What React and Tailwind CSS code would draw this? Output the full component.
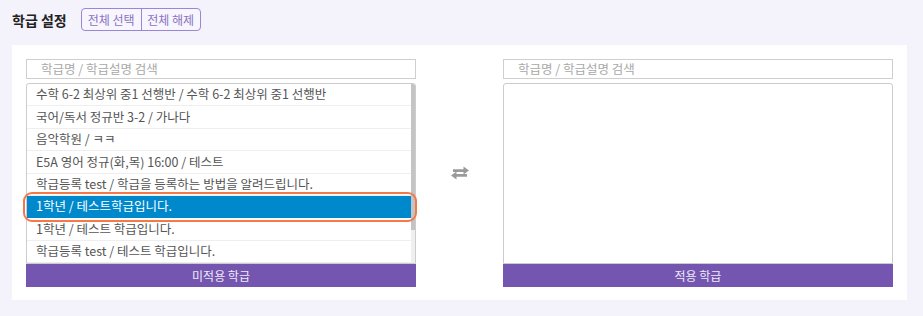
import React from "react";

const rows = [
  "수학 6-2 최상위 중1 선행반 / 수학 6-2 최상위 중1 선행반",
  "국어/독서 정규반 3-2 / 가나다",
  "음악학원 / ㅋㅋ",
  "E5A 영어 정규(화,목) 16:00 / 테스트",
  "학급등록 test / 학급을 등록하는 방법을 알려드립니다.",
  "1학년 / 테스트학급입니다.",
  "1학년 / 테스트 학급입니다.",
  "학급등록 test / 테스트 학급입니다.",
];

function SwapIcon() {
  return (
    <svg width="20" height="14" viewBox="0 0 20 14" fill="#9a9a9a">
      <path d="M3 3.2 L13.5 3.2 L13.5 0.6 L19 4.6 L13.5 8.6 L13.5 6 L3 6 Z" />
      <path d="M17 8 L6.5 8 L6.5 5.4 L1 9.4 L6.5 13.4 L6.5 10.8 L17 10.8 Z" />
    </svg>
  );
}

function SearchBox() {
  return (
    <div className="h-[20px] border border-[#cfcfcf] bg-white flex items-center pl-[14px] text-[12.5px] text-[#a8a8a8] leading-none">
      학급명 / 학급설명 검색
    </div>
  );
}

export default function App() {
  return (
    <div className="min-h-[316px] bg-[#f4f2fb] px-3 pt-2 font-['Noto_Sans_CJK_KR','Noto_Sans',sans-serif]">
      <div className="flex items-center h-[23px] gap-[14px]">
        <div className="text-[14px] font-bold text-[#222] leading-none">학급 설정</div>
        <div className="flex border border-[#9c84d6] rounded-[4px] overflow-hidden bg-[#f7f5fd]">
          <div className="w-[59px] h-[21px] flex items-center justify-center text-[12px] text-[#8a72c2] leading-none">
            전체 선택
          </div>
          <div className="w-[59px] h-[21px] flex items-center justify-center text-[12px] text-[#8a72c2] leading-none border-l border-[#9c84d6]">
            전체 해제
          </div>
        </div>
      </div>

      <div className="mt-[14px] w-[895px] h-[255px] bg-white px-[14px] pt-[14px] flex items-start">
        <div className="relative w-[390px] flex flex-col">
          <SearchBox />
          <div className="mt-[4px] h-[181px] border border-[#cccccc] rounded-t-[3px] flex overflow-hidden">
            <div className="flex-1 flex flex-col">
              {rows.map((r, i) => (
                <div
                  key={i}
                  className={
                    "h-[22.4px] shrink-0 flex items-center pl-[9px] text-[12.5px] leading-none border-b " +
                    (i === 5
                      ? "bg-[#0088cc] text-white border-[#0088cc]"
                      : "text-[#555555] border-[#eeeeee]")
                  }
                >
                  {r}
                </div>
              ))}
            </div>
            <div className="w-[4px] bg-[#efefef] flex flex-col">
              <div className="h-[146px] bg-[#c4c4c4]" />
            </div>
          </div>
          <div className="h-[23px] bg-[#7456b0] flex items-center justify-center text-[12px] text-[#eeeaf8] leading-none">
            미적용 학급
          </div>
          <div className="absolute left-[-3.5px] top-[132.5px] w-[394px] h-[30px] border-[2.5px] border-[#f47848] rounded-[9px]" />
        </div>

        <div className="w-[87px] h-[228px] flex items-center justify-center">
          <SwapIcon />
        </div>

        <div className="w-[390px] flex flex-col">
          <SearchBox />
          <div className="mt-[4px] h-[181px] border border-[#cccccc] rounded-t-[3px] bg-white" />
          <div className="h-[23px] bg-[#7456b0] flex items-center justify-center text-[12px] text-[#eeeaf8] leading-none">
            적용 학급
          </div>
        </div>
      </div>
    </div>
  );
}
